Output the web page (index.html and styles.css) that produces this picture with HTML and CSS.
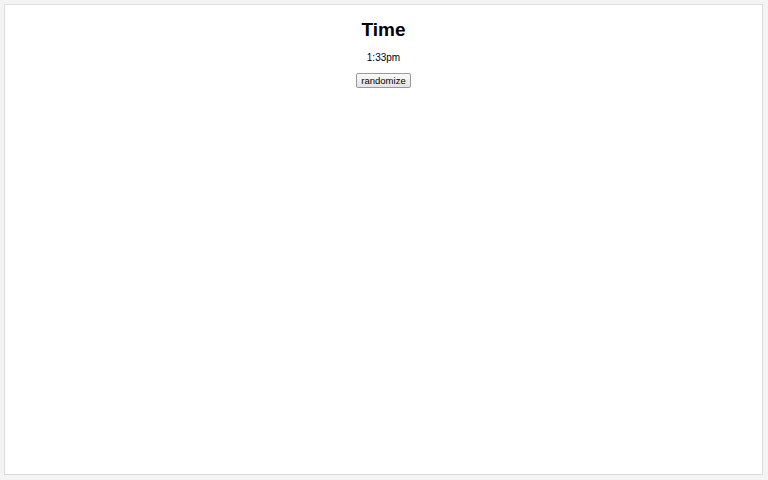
FILE: index.html
```html
<!DOCTYPE html>
<html>
<head>
<meta charset="utf-8">
<link rel="stylesheet" href="styles.css">
</head>
<body>
<div class="panel">
  <h1 class="title">Time</h1>
  <p class="time">1:33pm</p>
  <button class="btn">randomize</button>
</div>
</body>
</html>
```
FILE: styles.css
```css
html, body {
  margin: 0;
  padding: 0;
  background: #f4f4f4;
  width: 768px;
  height: 480px;
  overflow: hidden;
}
body {
  padding: 4px 5px 5px 4px;
  box-sizing: border-box;
  font-family: "Liberation Sans", Arial, sans-serif;
}
.panel {
  background: #fff;
  border: 1px solid #dcdcdc;
  height: 100%;
  box-sizing: border-box;
  display: flex;
  flex-direction: column;
  align-items: center;
}
.title {
  margin: 14px 0 0 0;
  font-size: 19px;
  font-weight: bold;
  line-height: 22px;
  color: #000;
}
.time {
  margin: 11px 0 0 0;
  font-size: 10px;
  line-height: 12px;
  color: #000;
}
.btn {
  margin-top: 9px;
  font-family: "Liberation Sans", Arial, sans-serif;
  font-size: 9.5px;
  padding: 1px 4px;
  line-height: 11px;
  border: 1px solid #999;
  border-radius: 2px;
  background: linear-gradient(#fafafa, #e4e4e4);
  color: #000;
}
```
